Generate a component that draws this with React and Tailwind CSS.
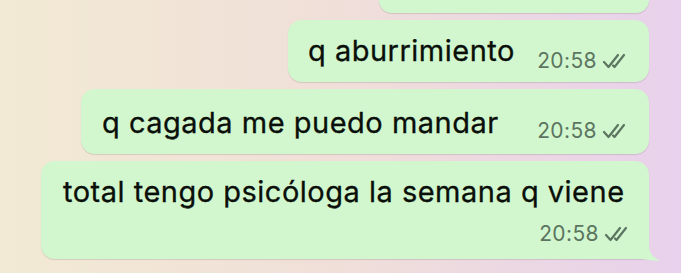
import React from "react";

function Checks() {
  return (
    <svg width="28" height="16" viewBox="0 0 28 16" fill="none" className="shrink-0">
      <path d="M2 9 L6.5 14 L16 2" stroke="#5c7560" strokeWidth="2.2" strokeLinecap="round" strokeLinejoin="round" />
      <path d="M11 12.5 L12.5 14 L22 2" stroke="#5c7560" strokeWidth="2.2" strokeLinecap="round" strokeLinejoin="round" />
    </svg>
  );
}

function Time({ className = "" }) {
  return (
    <div className={`flex items-center gap-[5px] ${className}`}>
      <span className="text-[21px] leading-[21px] tracking-[0.4px] text-[#5c7560]">20:58</span>
      <Checks />
    </div>
  );
}

export default function App() {
  return (
    <div className="w-[681px] h-[273px] overflow-hidden bg-gradient-to-r from-[#f2ead4] via-[#f0dfd9] to-[#e8d1ec] font-['Inter',sans-serif] text-[#0a0f0a]">
      <div className="flex flex-col items-end gap-[7px] pr-[32px]">
        {/* cut-off bubble */}
        <div className="w-[270px] h-[13px] rounded-b-[14px] bg-[#d2f7cf] shadow-[0_1px_1px_rgba(90,70,80,0.18)]" />

        <div className="w-[361px] h-[62px] rounded-[14px] bg-[#d2f7cf] shadow-[0_1px_1px_rgba(90,70,80,0.18)] flex items-start justify-between pl-[20px] pr-[19px]">
          <p className="pt-[14px] text-[29px] leading-[34px] tracking-[0.5px] [-webkit-text-stroke:0.3px_#0a0f0a]">q aburrimiento</p>
          <Time className="pt-[30px]" />
        </div>

        <div className="w-[568px] h-[65px] rounded-[14px] bg-[#d2f7cf] shadow-[0_1px_1px_rgba(90,70,80,0.18)] flex items-start justify-between pl-[21px] pr-[19px]">
          <p className="pt-[17px] text-[29px] leading-[34px] tracking-[0.5px] [-webkit-text-stroke:0.3px_#0a0f0a]">q cagada me puedo mandar</p>
          <Time className="pt-[31px]" />
        </div>

        <div className="relative w-[608px] h-[98px] rounded-[14px] rounded-br-none bg-[#d2f7cf] shadow-[0_1px_1px_rgba(90,70,80,0.18)] flex flex-col pl-[22px] pr-[17px]">
          <p className="pt-[14px] text-[29px] leading-[34px] tracking-[0.5px] whitespace-nowrap [-webkit-text-stroke:0.3px_#0a0f0a]">total tengo psicóloga la semana q viene</p>
          <Time className="self-end pt-[14px]" />
          <svg width="24" height="22" viewBox="0 0 24 22" className="absolute right-[-12px] bottom-[-2px]">
            <path d="M12 0 L12 6 C12 14 16 19 23.5 21.5 C17 22 10 21 4 20 L12 20 Z" fill="#d2f7cf" />
          </svg>
        </div>
      </div>
    </div>
  );
}
